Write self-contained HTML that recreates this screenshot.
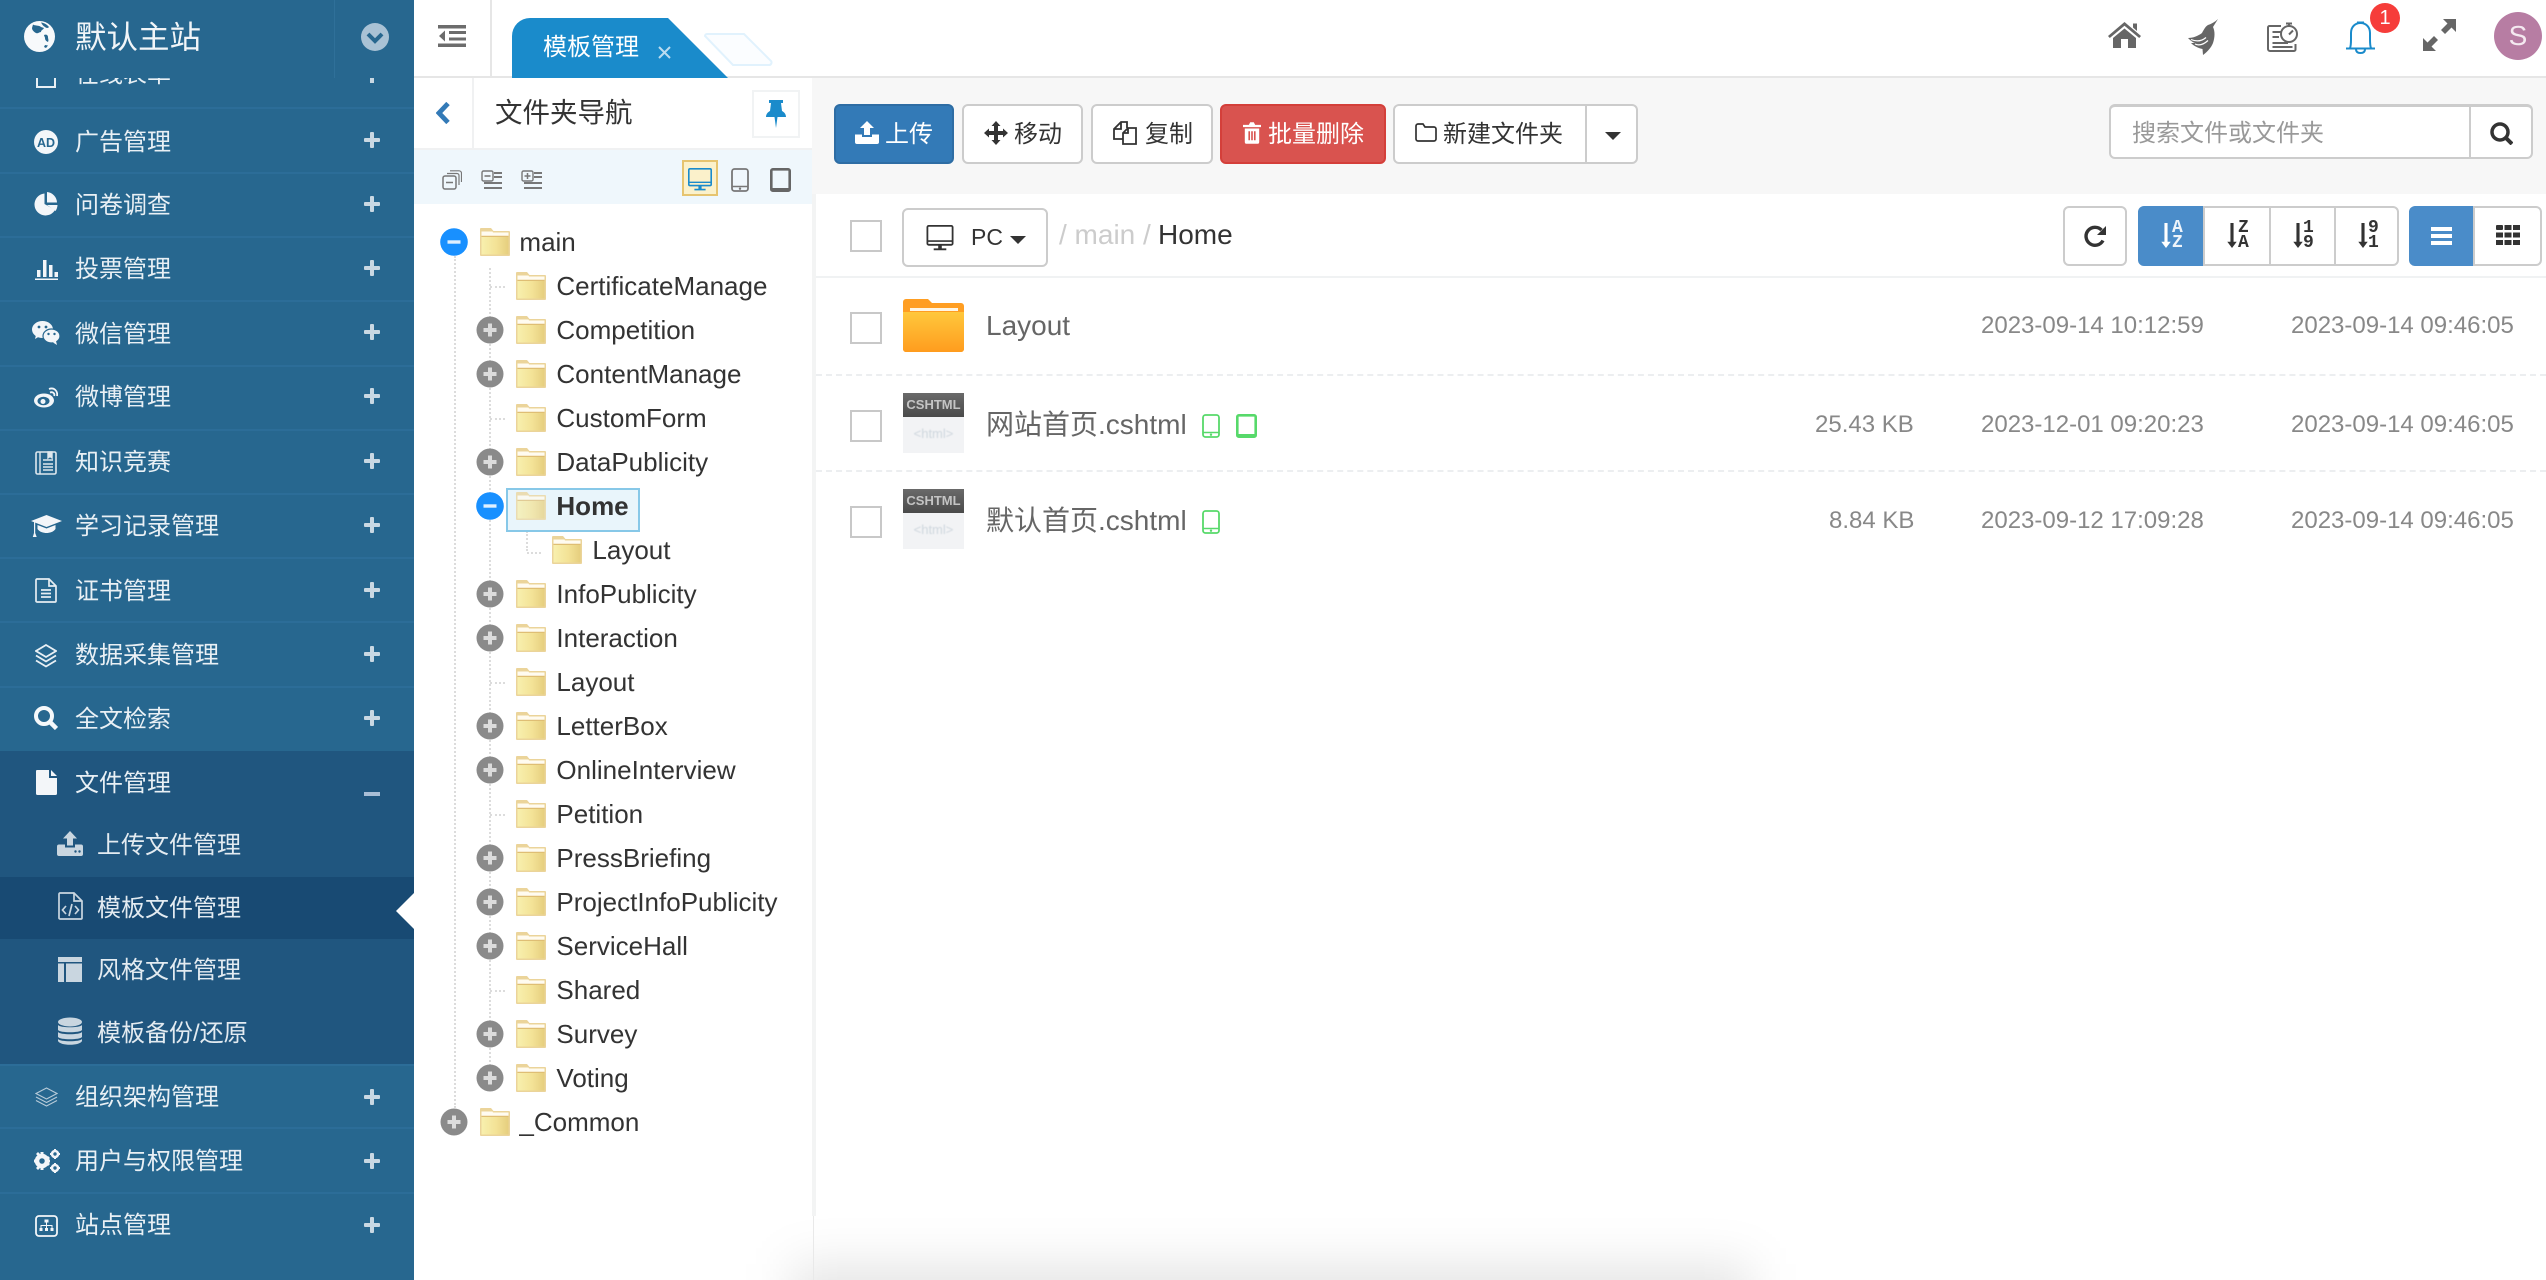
<!DOCTYPE html>
<html lang="zh-CN"><head><meta charset="utf-8"><title>模板管理</title>
<style>
html,body{margin:0;padding:0;width:2546px;height:1280px;overflow:hidden;background:#fff}
body{position:relative;font-family:"Liberation Sans","Noto Sans CJK SC",sans-serif;color:#333}
.a,.t,svg.i{position:absolute}
.t{white-space:nowrap;line-height:40px;height:40px}
.m{font-size:24px;color:#e9f0f5;left:75px;margin-top:2px}
.s{font-size:24px;color:#e3ebf1;left:97px;margin-top:2px}
.sep{position:absolute;left:0;width:414px;height:2px;background:#2c6d98}
.p{position:absolute;left:364px;width:16px;height:16px;margin-top:1px}
.p:before,.p:after{content:"";position:absolute;background:#c9d8e3;border-radius:1px}
.p:before{left:0;top:6px;width:16px;height:4px}.p:after{left:6px;top:0;width:4px;height:16px}
.n{font-size:26px;color:#333;margin-left:-.6px}
.d{font-size:24px;color:#888;margin-top:2px}
.b{position:absolute;box-sizing:border-box;height:60px;top:104px;border:2px solid #ccc;border-radius:6px;background:#fff}
.bb{position:absolute;box-sizing:border-box;height:60px;top:206px;border:2px solid #ccc;background:#fff}
.bt{font-size:24px;color:#333;margin-top:2px}
.cb{position:absolute;box-sizing:border-box;width:32px;height:32px;left:850px;border:2px solid #c8c8c8;background:#fff}
.dot{position:absolute;border-left:2px dotted #dcdcdc;width:0}
.doth{position:absolute;border-top:2px dotted #dcdcdc;height:0}
.mk{font-family:"Liberation Mono",monospace;font-weight:bold;font-size:18px;line-height:17px;color:#333;position:absolute;white-space:nowrap}
.th{position:absolute;left:903px;width:61px;height:60px;background:#f2f3f5}
.th i{display:block;height:24px;background:linear-gradient(#6a6a6a,#4a4a4a);color:#c4c4c4;font:bold 13px/24px "Liberation Sans",sans-serif;text-align:center}
.th b{display:block;font:normal 13px/34px "Liberation Sans",sans-serif;color:#cfd7de;text-align:center;filter:blur(.5px)}
.mm{margin-top:2px}
</style></head><body>
<svg width="0" height="0" style="position:absolute">
<defs>
<linearGradient id="fg" x1="0" y1="0" x2="1" y2="0"><stop offset="0" stop-color="#f8f0ae"/><stop offset=".55" stop-color="#f3e296"/><stop offset="1" stop-color="#e6ce7e"/></linearGradient>
<linearGradient id="og" x1="0" y1="0" x2="0" y2="1"><stop offset="0" stop-color="#ffc83c"/><stop offset="1" stop-color="#ff9c1e"/></linearGradient>
<symbol id="fo" viewBox="0 0 30 28"><path d="M1 0h10l2.500 3H29a1 1 0 0 1 1 1v23a1 1 0 0 1-1 1H1a1 1 0 0 1-1-1V1a1 1 0 0 1 1-1z" fill="#ebd49a"/><path d="M1.500 3.500h11l.5 1h15.500V8H1.500z" fill="#fffbf0"/><path d="M1.500 9h27v17.500h-27z" fill="url(#fg)"/><path d="M1.500 7.800h27V9h-27z" fill="#dfbe74"/></symbol>
<symbol id="pl" viewBox="0 0 28 28"><circle cx="14" cy="14" r="13.500" fill="#8a8a8a"/><path d="M12 7.500h4V12h4.500v4H16v4.500h-4V16H7.500v-4H12z" fill="#dcdcdc"/></symbol>
<symbol id="mi" viewBox="0 0 28 28"><circle cx="14" cy="14" r="13.800" fill="#1890ff"/><path d="M7.500 12.300h13v3.400h-13z" fill="#dff0ff"/></symbol>
<symbol id="ph" viewBox="0 0 18 24"><rect x="1" y="1" width="16" height="22" rx="2.500" fill="none" stroke="currentColor" stroke-width="1.800"/><path d="M1 18.500h16" stroke="currentColor" stroke-width="1.500"/><circle cx="9" cy="20.700" r="1.200" fill="currentColor"/></symbol>
<symbol id="tb" viewBox="0 0 21 24"><rect x="1.300" y="1.300" width="18.400" height="21.400" rx="1.500" fill="none" stroke="currentColor" stroke-width="2.600"/><path d="M1 20h19v3H1z" fill="currentColor"/></symbol>
<symbol id="mon" viewBox="0 0 32 30"><path d="M2 2.500a1.500 1.500 0 0 1 1.500-1.500h25A1.500 1.500 0 0 1 30 2.500v18a1.500 1.500 0 0 1-1.500 1.500h-25A1.500 1.500 0 0 1 2 20.500z" fill="none" stroke="currentColor" stroke-width="2"/><path d="M2 17h28v1.800H2zM14 22h4v4h-4zM9 26h14v2H9z" fill="currentColor"/></symbol>
<symbol id="dn" viewBox="0 0 12 32"><path d="M4 0h4v24h4l-6 8-6-8h4z" fill="currentColor"/></symbol>
</defs></svg>

<!-- sidebar -->
<div class="a" style="left:0;top:0;width:414px;height:1280px;background:#27678f"></div>
<div class="t m" style="top:53px">在线表单</div>
<svg class="i" style="left:36px;top:66px" width="20" height="22" viewBox="0 0 20 22"><rect x="1" y="1" width="18" height="20" fill="none" stroke="#e9f0f5" stroke-width="2"/></svg>
<div class="a" style="left:370px;top:70px;width:4px;height:13px;background:#c9d8e3"></div>
<div class="a" style="left:0;top:0;width:414px;height:78px;background:#27678f"></div>
<div class="a" style="left:334px;top:0;width:1px;height:78px;background:#2f7099"></div>
<svg class="i" style="left:24px;top:21px" width="31" height="31" viewBox="0 0 31 31"><circle cx="15.500" cy="15.500" r="15.500" fill="#f7f9fb"/><path d="M9 3.500C11 5 15 4 17 6l3 1c-1 2-3 2-3 4-2 0-3 2-5 1C10 11 8 9 8 7zM17 1.500c3 .3 6 2 8 4.500-1 1.500-3 1-4 0-2-1-3-3-4-4.500zM20 14c2-1 4 0 4 2s1 3 0 5c-2-1-3-2-3-4 0-1-1-2-1-3zM21 24l3 .500-2 2.500-2-1z" fill="#27678f"/></svg>
<div class="t" style="left:75px;top:17px;font-size:31.500px;color:#f1f5f8">默认主站</div>
<svg class="i" style="left:361px;top:23px" width="28" height="28" viewBox="0 0 28 28"><circle cx="14" cy="14" r="14" fill="#a9c2d5"/><path d="M7 11l7 7 7-7" fill="none" stroke="#27678f" stroke-width="4"/></svg>

<div class="sep" style="top:107px"></div><div class="sep" style="top:172px"></div><div class="sep" style="top:236px"></div><div class="sep" style="top:300px"></div><div class="sep" style="top:365px"></div><div class="sep" style="top:429px"></div><div class="sep" style="top:493px"></div><div class="sep" style="top:557px"></div><div class="sep" style="top:621px"></div><div class="sep" style="top:686px"></div>

<div class="t m" style="top:121px">广告管理</div><div class="p" style="top:131px"></div>
<svg class="i" style="left:34px;top:130px" width="24" height="24" viewBox="0 0 24 24"><circle cx="12" cy="12" r="12" fill="#f3f6f9"/><text x="12" y="17" text-anchor="middle" font-family="Liberation Sans" font-weight="bold" font-size="12.500" fill="#27678f">AD</text></svg>
<div class="t m" style="top:184px">问卷调查</div><div class="p" style="top:195px"></div>
<svg class="i" style="left:34px;top:192px" width="24" height="24" viewBox="0 0 24 24"><path d="M10.500 1.500A11 11 0 1 0 21 18l-10.500-6z" fill="#f3f6f9"/><path d="M13 0a11 11 0 0 1 10 10.500H13z" fill="#f3f6f9"/><path d="M13 13h10.500a11 11 0 0 1-2 6z" fill="#f3f6f9"/></svg>
<div class="t m" style="top:248px">投票管理</div><div class="p" style="top:259px"></div>
<svg class="i" style="left:35px;top:258px" width="23" height="22" viewBox="0 0 23 22"><path d="M2 12h3.500v7H2zM8 2h3.500v17H8zM14 7h3.500v12H14zM19.500 14H23v5h-3.500zM0 20.500h23V22H0z" fill="#f3f6f9"/></svg>
<div class="t m" style="top:313px">微信管理</div><div class="p" style="top:323px"></div>
<svg class="i" style="left:32px;top:321px" width="28" height="24" viewBox="0 0 28 24"><ellipse cx="10.500" cy="8.500" rx="10.500" ry="8.500" fill="#f3f6f9"/><path d="M4 14l-1 4 5-3z" fill="#f3f6f9"/><ellipse cx="19.500" cy="15" rx="8.500" ry="7" fill="#f3f6f9" stroke="#27678f" stroke-width="1.200"/><path d="M24 20l1 4-4-2.500z" fill="#f3f6f9"/><circle cx="7" cy="6" r="1.400" fill="#27678f"/><circle cx="14" cy="6" r="1.400" fill="#27678f"/><circle cx="16.500" cy="13" r="1.200" fill="#27678f"/><circle cx="22.500" cy="13" r="1.200" fill="#27678f"/></svg>
<div class="t m" style="top:376px">微博管理</div><div class="p" style="top:387px"></div>
<svg class="i" style="left:34px;top:387px" width="24" height="21" viewBox="0 0 24 21"><ellipse cx="10" cy="13.500" rx="10" ry="7" fill="#f3f6f9"/><ellipse cx="9.500" cy="14" rx="6" ry="4.300" fill="#27678f"/><circle cx="9" cy="14.500" r="2.500" fill="#f3f6f9"/><path d="M15 2c5-2 9 2 8 7M16 5.500c3-1 5 1 4.200 3.500" fill="none" stroke="#f3f6f9" stroke-width="1.800"/></svg>
<div class="t m" style="top:441px">知识竞赛</div><div class="p" style="top:452px"></div>
<svg class="i" style="left:35px;top:451px" width="22" height="24" viewBox="0 0 22 24"><rect x="1" y="1" width="20" height="22" rx="1.500" fill="none" stroke="#dfe8ee" stroke-width="1.600"/><path d="M5 1v22M13 1v6l2-1.500L17 7V1zM8 9h10M8 13h10M8 16h10M8 19h10" fill="none" stroke="#dfe8ee" stroke-width="1.400"/><path d="M13 1h4v6l-2-1.500L13 7z" fill="#dfe8ee"/></svg>
<div class="t m" style="top:505px">学习记录管理</div><div class="p" style="top:516px"></div>
<svg class="i" style="left:31px;top:515px" width="31" height="22" viewBox="0 0 31 22"><path d="M15.500 0L31 6 15.500 12 0 6zM6.500 10l9 3.500 9-3.500v4c-2 3-6 4-9 4s-7-1-9-4z" fill="#f3f6f9"/><path d="M3 7l1.200.5V18l1.500 4H1.800L3 18z" fill="#f3f6f9"/></svg>
<div class="t m" style="top:570px">证书管理</div><div class="p" style="top:581px"></div>
<svg class="i" style="left:35px;top:578px" width="22" height="25" viewBox="0 0 22 25"><path d="M2 1h12l7 7v15a1 1 0 0 1-1 1H2a1 1 0 0 1-1-1V2a1 1 0 0 1 1-1zM14 1v7h7M6 12h10M6 15.500h10M6 19h10" fill="none" stroke="#e6edf2" stroke-width="1.700"/></svg>
<div class="t m" style="top:634px">数据采集管理</div><div class="p" style="top:645px"></div>
<svg class="i" style="left:35px;top:644px" width="22" height="24" viewBox="0 0 22 24"><path d="M11 1l10 6-10 6L1 7zM1 11.500l10 6 10-6M1 16.500l10 6 10-6" fill="none" stroke="#e9f0f5" stroke-width="1.800"/></svg>
<div class="t m" style="top:698px">全文检索</div><div class="p" style="top:709px"></div>
<svg class="i" style="left:34px;top:706px" width="24" height="24" viewBox="0 0 24 24"><circle cx="10" cy="10" r="8" fill="none" stroke="#f5f8fa" stroke-width="4"/><path d="M15.500 15.500l7 7" stroke="#f5f8fa" stroke-width="4.500"/></svg>

<div class="a" style="left:0;top:751px;width:414px;height:313px;background:#20567f"></div>
<div class="a" style="left:0;top:877px;width:414px;height:62px;background:#184a73"></div>
<svg class="i" style="left:396px;top:893px" width="18" height="36" viewBox="0 0 18 36"><path d="M18 0L0 18l18 18z" fill="#fff"/></svg>
<div class="t m" style="top:762px">文件管理</div>
<div class="a" style="left:364px;top:792px;width:16px;height:4px;background:#a9bed6"></div>
<svg class="i" style="left:36px;top:770px" width="21" height="25" viewBox="0 0 21 25"><path d="M1 0h12v8h8v15.500a1.500 1.500 0 0 1-1.500 1.500h-18A1.500 1.500 0 0 1 0 23.500V1a1 1 0 0 1 1-1zM15 0l6 6h-6z" fill="#f3f6f9"/></svg>
<div class="t s" style="top:824px">上传文件管理</div>
<svg class="i" style="left:57px;top:831px" width="26" height="25" viewBox="0 0 26 25"><path d="M13 0l7 7.500h-4v7h-6v-7H6zM0 15.500a2 2 0 0 1 2-2h6v3h10v-3h6a2 2 0 0 1 2 2V23a2 2 0 0 1-2 2H2a2 2 0 0 1-2-2z" fill="#c9d6e0"/><circle cx="18.500" cy="20.500" r="1.200" fill="#20567f"/><circle cx="22.500" cy="20.500" r="1.200" fill="#20567f"/></svg>
<div class="t s" style="top:887px">模板文件管理</div>
<svg class="i" style="left:58px;top:892px" width="25" height="28" viewBox="0 0 25 28"><path d="M2 1h14l8 8v17a1 1 0 0 1-1 1H2a1 1 0 0 1-1-1V2a1 1 0 0 1 1-1zM16 1v8h8M8 14l-3.500 4L8 22M17 14l3.500 4-3.500 4M14 12l-3 12" fill="none" stroke="#c9d6e0" stroke-width="1.700"/></svg>
<div class="t s" style="top:949px">风格文件管理</div>
<svg class="i" style="left:58px;top:957px" width="24" height="25" viewBox="0 0 24 25"><path d="M0 0h24v5H0zM0 6.500h6V25H0zM8 6.500h16V25H8z" fill="#c9d6e0"/></svg>
<div class="t s" style="top:1012px">模板备份/还原</div>
<svg class="i" style="left:58px;top:1017px" width="24" height="28" viewBox="0 0 24 28"><ellipse cx="12" cy="5" rx="12" ry="4.500" fill="#c9d6e0"/><path d="M0 8c2 3 22 3 24 0v5c-2 3-22 3-24 0zM0 15c2 3 22 3 24 0v5c-2 3-22 3-24 0zM0 22c2 3 22 3 24 0v2c-2 5-22 5-24 0z" fill="#c9d6e0"/></svg>

<div class="sep" style="top:1064px"></div><div class="sep" style="top:1127px"></div><div class="sep" style="top:1192px"></div>
<div class="t m" style="top:1076px">组织架构管理</div><div class="p" style="top:1088px"></div>
<svg class="i" style="left:35px;top:1087px" width="23" height="21" viewBox="0 0 23 21"><path d="M11.500 1L22 6.500 11.500 12 1 6.500zM1 10l10.500 5.500L22 10M1 13.500L11.500 19 22 13.500" fill="none" stroke="#b7cbd9" stroke-width="1.100"/></svg>
<div class="t m" style="top:1140px">用户与权限管理</div><div class="p" style="top:1152px"></div>
<svg class="i" style="left:33px;top:1149px" width="27" height="24" viewBox="0 0 27 24"><circle cx="9" cy="12" r="5" fill="none" stroke="#f3f6f9" stroke-width="4.500"/><path d="M7.500 3h3v3h-3zM7.500 18h3v3h-3zM1 10.500h3v3H1zM14 10.500h3v3h-3zM3 5l2-2 2 2-2 2zM13 15l2-2 2 2-2 2zM3 19l2 2 2-2-2-2zM13 9l2 2 2-2-2-2z" fill="#f3f6f9"/><circle cx="22" cy="5" r="3" fill="none" stroke="#f3f6f9" stroke-width="2.600"/><circle cx="22" cy="19" r="3" fill="none" stroke="#f3f6f9" stroke-width="2.600"/><path d="M21 0h2v2h-2zM21 8h2v2h-2zM17 4h2v2h-2zM25 4h2v2h-2zM21 14h2v2h-2zM21 22h2v2h-2zM17 18h2v2h-2zM25 18h2v2h-2z" fill="#f3f6f9"/></svg>
<div class="t m" style="top:1204px">站点管理</div><div class="p" style="top:1216px"></div>
<svg class="i" style="left:35px;top:1215px" width="23" height="22" viewBox="0 0 23 22"><rect x="1" y="1" width="21" height="20" rx="3" fill="none" stroke="#f3f6f9" stroke-width="1.800"/><path d="M9.500 4.500h4v3h-4zM11 7.500h1v2.500h5.500v3h-1v-2H12v2h-1v-2H6.500v2h-1v-3H11zM4.500 13h3v3h-3zM10 13h3v3h-3zM15.500 13h3v3h-3z" fill="#f3f6f9"/></svg>

<!-- top header -->
<div class="a" style="left:414px;top:76px;width:2132px;height:2px;background:#e6e6e6"></div>
<svg class="i" style="left:438px;top:25px" width="28" height="22" viewBox="0 0 28 22"><path d="M0 0h28v3.500H0zM11 6h17v3H11zM11 12.500h17v3H11zM0 18.500h28V22H0zM7 5.500v11L1 11z" fill="#6c6c6c"/></svg>
<div class="a" style="left:490px;top:0;width:2px;height:76px;background:#e6e6e6"></div>
<svg class="i" style="left:512px;top:18px" width="216" height="60" viewBox="0 0 216 60"><path d="M0 60V18A18 18 0 0 1 18 0h138l60 60z" fill="#1a8bcb"/></svg>
<div class="t" style="left:543px;top:28px;font-size:24px;color:#fff">模板管理</div>
<svg class="i" style="left:658px;top:46px" width="13" height="13" viewBox="0 0 13 13"><path d="M1 1l11 11M12 1L1 12" stroke="#bcdcf0" stroke-width="2"/></svg>
<svg class="i" style="left:703px;top:33px" width="70" height="33" viewBox="0 0 70 33"><path d="M2 3a2 2 0 0 1 2-2h37l27 27a2.500 2.500 0 0 1-2 4H30z" fill="#fbfdff" stroke="#e1f2fd" stroke-width="2"/></svg>

<svg class="i" style="left:2108px;top:22px" width="33" height="26" viewBox="0 0 33 26"><path d="M16.500 0L33 14l-1.800 2L16.500 3.800 1.800 16 0 14z M25 1.500h4V9l-4-3.500z M5 16L16.500 6.500 28 16v10h-8v-9h-7v9H5z" fill="#666"/></svg>
<svg class="i" style="left:2188px;top:19px" width="31" height="36" viewBox="0 0 31 36"><path d="M30 0L25 8C27 12 27 18 25 24 23 29 19 33 15 36L14.500 30C10 29 6 27 3 24L7 24C4 23 2 21 0 19 5 19 10 17 14 14 16 10 18 7 20 6 23 5 27 3 30 0z" fill="#666"/><path d="M3 20.500C9 23 14 22 18 18.500M7 25C11 27 15 26 20 21.500" fill="none" stroke="#fff" stroke-width="1.200"/></svg>
<svg class="i" style="left:2267px;top:22px" width="31" height="31" viewBox="0 0 31 31"><path d="M14 4H2.500A1.500 1.500 0 0 0 1 5.500V27a2 2 0 0 0 2 2h24a1.500 1.500 0 0 0 1.500-1.500V22M5.500 10H14M5.500 15H12M5.500 21H21M5.500 25h20" fill="none" stroke="#666" stroke-width="2"/><circle cx="22" cy="12" r="8" fill="#fff" stroke="#666" stroke-width="2"/><path d="M19 1.500h6M22 1.500v3M26 8.500L22 12.500" fill="none" stroke="#666" stroke-width="2"/></svg>
<svg class="i" style="left:2346px;top:21px" width="29" height="33" viewBox="0 0 29 33"><path d="M0 27.500h29M4 27c1-2 1-5 1-9V12C5 6 9 2 14.500 2S24 6 24 12v6c0 4 0 7 1 9M11 1.500h7M10 28c0 3 2 4 4.500 4s4.500-1 4.500-4" fill="none" stroke="#1a8bcb" stroke-width="2"/></svg>
<div class="a" style="left:2370px;top:3px;width:30px;height:30px;border-radius:50%;background:#f63d3a;color:#fff;font-size:20px;line-height:30px;text-align:center">1</div>
<svg class="i" style="left:2423px;top:19px" width="33" height="32" viewBox="0 0 33 32"><path d="M33 0v13l-4.500-4.500L22 15l-4-4 6.500-6.500L20 0zM0 32V19l4.500 4.500L11 17l4 4-6.500 6.500L13 32z" fill="#666"/></svg>
<div class="a" style="left:2494px;top:12px;width:48px;height:48px;border-radius:50%;background:#b77da3;color:#f4e9f0;font-size:28px;line-height:47px;text-align:center">S</div>

<!-- folder nav panel -->
<div class="a" style="left:472px;top:78px;width:2px;height:70px;background:#f0f1f2"></div>
<div class="a" style="left:414px;top:148px;width:398px;height:2px;background:#f0f1f2"></div>
<svg class="i" style="left:436px;top:102px" width="15" height="22" viewBox="0 0 15 22"><path d="M12 1.500L3 11l9 9.500" fill="none" stroke="#337ab7" stroke-width="4.800"/></svg>
<div class="t" style="left:495px;top:93px;font-size:27.500px;color:#333">文件夹导航</div>
<div class="a" style="left:752px;top:90px;width:48px;height:48px;box-sizing:border-box;border:2px solid #f1f3f4"></div>
<svg class="i" style="left:766px;top:100px" width="20" height="28" viewBox="0 0 20 28"><path d="M3 0h14v3h-2l1 8c2 1 4 3 4 6H11.500L10 28l-1.500-11H0c0-3 2-5 4-6l1-8H3z" fill="#1a8bcb"/></svg>
<div class="a" style="left:414px;top:150px;width:398px;height:54px;background:#eff7fc"></div>
<svg class="i" style="left:442px;top:170px" width="20" height="20" viewBox="0 0 20 20"><rect x="1" y="6" width="13" height="13" rx="2" fill="none" stroke="#777" stroke-width="1.500"/><path d="M4 12.500h7" stroke="#777" stroke-width="1.500"/><path d="M5 3.500h10a2 2 0 0 1 2 2V15M8 .8h9a2.500 2.500 0 0 1 2.500 2.500V12" fill="none" stroke="#777" stroke-width="1.200"/></svg>
<svg class="i" style="left:481px;top:170px" width="21" height="20" viewBox="0 0 21 20"><rect x="1" y="1" width="11" height="10" rx="1.500" fill="none" stroke="#777" stroke-width="1.400"/><path d="M3.500 6h6" stroke="#777" stroke-width="1.600"/><path d="M13 2h8v2h-8zM13 6h8v2h-8zM3 12h18v2H3zM3 17h18v2H3z" fill="#777"/></svg>
<svg class="i" style="left:521px;top:170px" width="21" height="20" viewBox="0 0 21 20"><rect x="1" y="1" width="11" height="10" rx="1.500" fill="none" stroke="#777" stroke-width="1.400"/><path d="M3.500 6h6M6.500 3v6" stroke="#777" stroke-width="1.500"/><path d="M13 2h8v2h-8zM13 6h8v2h-8zM3 12h18v2H3zM3 17h18v2H3z" fill="#777"/></svg>
<div class="a" style="left:682px;top:160px;width:36px;height:36px;box-sizing:border-box;background:#fbf1cb;border:2.500px solid #e6c470"></div>
<svg class="i" style="left:686px;top:168px;color:#1a8bcb" width="28" height="24"><use href="#mon"/></svg>
<svg class="i" style="left:731px;top:168px;color:#777" width="18" height="24"><use href="#ph"/></svg>
<svg class="i" style="left:770px;top:168px;color:#666" width="21" height="24"><use href="#tb"/></svg>

<!-- tree -->
<div class="dot" style="left:454px;top:256px;height:852px"></div>
<div class="dot" style="left:489px;top:268px;height:810px"></div>
<div class="doth" style="left:490px;top:286px;width:15px"></div>
<div class="doth" style="left:490px;top:418px;width:15px"></div>
<div class="doth" style="left:490px;top:682px;width:15px"></div>
<div class="doth" style="left:490px;top:814px;width:15px"></div>
<div class="doth" style="left:490px;top:990px;width:15px"></div>
<div class="dot" style="left:526px;top:531px;height:20px"></div>
<div class="doth" style="left:527px;top:552px;width:14px"></div>

<div class="a" style="left:506px;top:488px;width:134px;height:44px;box-sizing:border-box;background:#e9f5fb;border:2px solid #87c8e8"></div>

<svg class="i" style="left:440px;top:228px" width="28" height="28"><use href="#mi"/></svg>
<svg class="i" style="left:480px;top:228px" width="30" height="28"><use href="#fo"/></svg>
<div class="t n" style="left:520px;top:222px">main</div>

<svg class="i" style="left:516px;top:272px" width="30" height="28"><use href="#fo"/></svg><div class="t n" style="left:557px;top:266px">CertificateManage</div>
<svg class="i" style="left:476px;top:316px" width="28" height="28"><use href="#pl"/></svg><svg class="i" style="left:516px;top:316px" width="30" height="28"><use href="#fo"/></svg><div class="t n" style="left:557px;top:310px">Competition</div>
<svg class="i" style="left:476px;top:360px" width="28" height="28"><use href="#pl"/></svg><svg class="i" style="left:516px;top:360px" width="30" height="28"><use href="#fo"/></svg><div class="t n" style="left:557px;top:354px">ContentManage</div>
<svg class="i" style="left:516px;top:404px" width="30" height="28"><use href="#fo"/></svg><div class="t n" style="left:557px;top:398px">CustomForm</div>
<svg class="i" style="left:476px;top:448px" width="28" height="28"><use href="#pl"/></svg><svg class="i" style="left:516px;top:448px" width="30" height="28"><use href="#fo"/></svg><div class="t n" style="left:557px;top:442px">DataPublicity</div>
<svg class="i" style="left:476px;top:492px" width="28" height="28"><use href="#mi"/></svg><svg class="i" style="left:516px;top:492px" width="30" height="28" opacity=".75"><use href="#fo"/></svg><div class="t n" style="left:557px;top:486px;font-weight:bold">Home</div>
<svg class="i" style="left:552px;top:536px" width="30" height="28"><use href="#fo"/></svg><div class="t n" style="left:593px;top:530px">Layout</div>
<svg class="i" style="left:476px;top:580px" width="28" height="28"><use href="#pl"/></svg><svg class="i" style="left:516px;top:580px" width="30" height="28"><use href="#fo"/></svg><div class="t n" style="left:557px;top:574px">InfoPublicity</div>
<svg class="i" style="left:476px;top:624px" width="28" height="28"><use href="#pl"/></svg><svg class="i" style="left:516px;top:624px" width="30" height="28"><use href="#fo"/></svg><div class="t n" style="left:557px;top:618px">Interaction</div>
<svg class="i" style="left:516px;top:668px" width="30" height="28"><use href="#fo"/></svg><div class="t n" style="left:557px;top:662px">Layout</div>
<svg class="i" style="left:476px;top:712px" width="28" height="28"><use href="#pl"/></svg><svg class="i" style="left:516px;top:712px" width="30" height="28"><use href="#fo"/></svg><div class="t n" style="left:557px;top:706px">LetterBox</div>
<svg class="i" style="left:476px;top:756px" width="28" height="28"><use href="#pl"/></svg><svg class="i" style="left:516px;top:756px" width="30" height="28"><use href="#fo"/></svg><div class="t n" style="left:557px;top:750px">OnlineInterview</div>
<svg class="i" style="left:516px;top:800px" width="30" height="28"><use href="#fo"/></svg><div class="t n" style="left:557px;top:794px">Petition</div>
<svg class="i" style="left:476px;top:844px" width="28" height="28"><use href="#pl"/></svg><svg class="i" style="left:516px;top:844px" width="30" height="28"><use href="#fo"/></svg><div class="t n" style="left:557px;top:838px">PressBriefing</div>
<svg class="i" style="left:476px;top:888px" width="28" height="28"><use href="#pl"/></svg><svg class="i" style="left:516px;top:888px" width="30" height="28"><use href="#fo"/></svg><div class="t n" style="left:557px;top:882px">ProjectInfoPublicity</div>
<svg class="i" style="left:476px;top:932px" width="28" height="28"><use href="#pl"/></svg><svg class="i" style="left:516px;top:932px" width="30" height="28"><use href="#fo"/></svg><div class="t n" style="left:557px;top:926px">ServiceHall</div>
<svg class="i" style="left:516px;top:976px" width="30" height="28"><use href="#fo"/></svg><div class="t n" style="left:557px;top:970px">Shared</div>
<svg class="i" style="left:476px;top:1020px" width="28" height="28"><use href="#pl"/></svg><svg class="i" style="left:516px;top:1020px" width="30" height="28"><use href="#fo"/></svg><div class="t n" style="left:557px;top:1014px">Survey</div>
<svg class="i" style="left:476px;top:1064px" width="28" height="28"><use href="#pl"/></svg><svg class="i" style="left:516px;top:1064px" width="30" height="28"><use href="#fo"/></svg><div class="t n" style="left:557px;top:1058px">Voting</div>
<svg class="i" style="left:440px;top:1108px" width="28" height="28"><use href="#pl"/></svg><svg class="i" style="left:480px;top:1108px" width="30" height="28"><use href="#fo"/></svg><div class="t n" style="left:520px;top:1102px">_Common</div>

<!-- right area -->
<div class="a" style="left:812px;top:78px;width:1734px;height:116px;background:#f7f7f7"></div>
<div class="a" style="left:812px;top:194px;width:4px;height:1022px;background:#f3f4f4"></div>

<svg class="i" style="left:700px;top:1190px" width="1150" height="90" viewBox="0 0 1150 90"><defs><filter id="sh" x="-20%" y="-100%" width="140%" height="300%"><feGaussianBlur stdDeviation="24"/></filter></defs><rect x="92" y="74" width="958" height="80" fill="#000" fill-opacity=".1" filter="url(#sh)"/></svg>
<div class="a" style="left:813px;top:1216px;width:1px;height:64px;background:#e9e9e9"></div>

<div class="b" style="left:834px;width:120px;background:#337ab7;border-color:#2e6da4"></div>
<svg class="i" style="left:855px;top:121px" width="24" height="23" viewBox="0 0 24 23"><path d="M12 0l7 7h-4v7H9V7H5zM0 13.500h7V16h10v-2.500h7V21a2 2 0 0 1-2 2H2a2 2 0 0 1-2-2z" fill="#fff"/></svg>
<div class="t bt" style="left:885px;top:113px;color:#fff">上传</div>
<div class="b" style="left:962px;width:121px"></div>
<svg class="i" style="left:984px;top:121px" width="24" height="24" viewBox="0 0 24 24"><path d="M12 0l4.500 5H14v5h5V7.500l5 4.500-5 4.500V14h-5v5h2.500L12 24l-4.500-5H10v-5H5v2.500L0 12l5-4.500V10h5V5H7.500z" fill="#333"/></svg>
<div class="t bt" style="left:1014px;top:113px">移动</div>
<div class="b" style="left:1091px;width:122px"></div>
<svg class="i" style="left:1113px;top:121px" width="24" height="24" viewBox="0 0 24 24"><path d="M15 7H23V23H10V12zM15 7v5h-5M10 18H1V8L8 1H14V7M8 1V8H1" fill="none" stroke="#333" stroke-width="1.800"/></svg>
<div class="t bt" style="left:1145px;top:113px">复制</div>
<div class="b" style="left:1220px;width:166px;background:#d9534f;border-color:#d43f3a"></div>
<svg class="i" style="left:1243px;top:122px" width="18" height="22" viewBox="0 0 20 24"><path d="M6.500 3L8 0h4l1.500 3H20v2.500H0V3zM2 7h16v15a2 2 0 0 1-2 2H4a2 2 0 0 1-2-2zM6 10v10h1.800V10zm3.100 0v10h1.800V10zm3.100 0v10H14V10z" fill="#fff" fill-rule="evenodd"/></svg>
<div class="t bt" style="left:1268px;top:113px;color:#fff">批量删除</div>
<div class="b" style="left:1393px;width:194px;border-radius:6px 0 0 6px"></div>
<svg class="i" style="left:1415px;top:123px" width="22" height="19" viewBox="0 0 22 19"><path d="M1 3a2 2 0 0 1 2-2h5l2 3h9a2 2 0 0 1 2 2v10a2 2 0 0 1-2 2H3a2 2 0 0 1-2-2z" fill="none" stroke="#333" stroke-width="1.700"/></svg>
<div class="t bt" style="left:1443px;top:113px">新建文件夹</div>
<div class="b" style="left:1585px;width:53px;border-radius:0 6px 6px 0"></div>
<div class="a" style="left:1605px;top:132px;width:0;height:0;border-left:8px solid transparent;border-right:8px solid transparent;border-top:8px solid #333"></div>

<div class="a" style="left:2109px;top:104px;width:424px;height:55px;box-sizing:border-box;border:2px solid #ccc;border-top-width:3px;border-radius:6px;background:#fff"></div>
<div class="a" style="left:2469px;top:106px;width:2px;height:52px;background:#ccc"></div>
<div class="t mm" style="left:2132px;top:112px;font-size:24px;color:#999">搜索文件或文件夹</div>
<svg class="i" style="left:2490px;top:122px" width="23" height="23" viewBox="0 0 23 23"><circle cx="10" cy="10" r="8" fill="none" stroke="#333" stroke-width="3.500"/><path d="M15.500 15.500l6.500 6.500" stroke="#333" stroke-width="4"/></svg>

<div class="cb" style="top:220px"></div>
<div class="a" style="left:902px;top:208px;width:146px;height:59px;box-sizing:border-box;border:2px solid #ccc;border-radius:6px;background:#fff"></div>
<svg class="i" style="left:924px;top:225px;color:#333" width="32" height="27" viewBox="0 0 32 30"><use href="#mon"/></svg>
<div class="t" style="left:971px;top:217px;font-size:23px;color:#333">PC</div>
<div class="a" style="left:1010px;top:236px;width:0;height:0;border-left:8px solid transparent;border-right:8px solid transparent;border-top:8px solid #333"></div>
<div class="t" style="left:1059px;top:215px;font-size:28px;color:#ccc">/ main /</div>
<div class="t" style="left:1158px;top:215px;font-size:28px;color:#333">Home</div>

<div class="bb" style="left:2063px;width:64px;border-radius:6px"></div>
<svg class="i" style="left:2084px;top:225px" width="23" height="23" viewBox="0 0 23 23"><path d="M19 15.500A9 9 0 1 1 17.500 5" fill="none" stroke="#333" stroke-width="3.400"/><path d="M22 1v9h-9z" fill="#333"/></svg>
<div class="bb" style="left:2138px;width:67px;border-radius:6px 0 0 6px;background:#4a8cc9;border-color:#4a8cc9"></div>
<div class="bb" style="left:2203px;width:68px"></div>
<div class="bb" style="left:2269px;width:67px"></div>
<div class="bb" style="left:2334px;width:65px;border-radius:0 6px 6px 0"></div>
<svg class="i" style="left:2160px;top:223px;color:#fff" width="12" height="25"><use href="#dn"/></svg>
<div class="mk" style="left:2172px;top:220px;color:#eef4fa">A</div><div class="mk" style="left:2172px;top:235px;color:#eef4fa">Z</div>
<svg class="i" style="left:2226px;top:223px;color:#333" width="12" height="25"><use href="#dn"/></svg>
<div class="mk" style="left:2238px;top:220px">Z</div><div class="mk" style="left:2238px;top:235px">A</div>
<svg class="i" style="left:2292px;top:223px;color:#333" width="12" height="25"><use href="#dn"/></svg>
<div class="mk" style="left:2303px;top:220px">1</div><div class="mk" style="left:2303px;top:235px">9</div>
<svg class="i" style="left:2357px;top:223px;color:#333" width="12" height="25"><use href="#dn"/></svg>
<div class="mk" style="left:2368px;top:220px">9</div><div class="mk" style="left:2368px;top:235px">1</div>
<div class="bb" style="left:2409px;width:66px;border-radius:6px 0 0 6px;background:#4a8cc9;border-color:#4a8cc9"></div>
<div class="bb" style="left:2473px;width:69px;border-radius:0 6px 6px 0"></div>
<div class="a" style="left:2431px;top:227px;width:21px;height:18px;background:linear-gradient(#fff 0 4px,transparent 4px 7px,#fff 7px 11px,transparent 11px 14px,#fff 14px 18px)"></div>
<svg class="i" style="left:2496px;top:225px" width="24" height="20" viewBox="0 0 24 20"><path d="M0 1a1 1 0 0 1 1-1h5a1 1 0 0 1 1 1v3a1 1 0 0 1-1 1H1a1 1 0 0 1-1-1zM8.500 0h7v5h-7zM17 0h7v5h-7zM0 7.500h7v5H0zM8.500 7.500h7v5h-7zM17 7.500h7v5h-7zM0 15h7v5H0zM8.500 15h7v5h-7zM17 15h7v5h-7z" fill="#333"/></svg>
<div class="a" style="left:816px;top:276px;width:1730px;height:2px;background:#f0f2f3"></div>

<!-- rows -->
<div class="cb" style="top:312px"></div>
<svg class="i" style="left:903px;top:299px" width="61" height="53" viewBox="0 0 61 53"><path d="M3 0h22l4 4h29a3 3 0 0 1 3 3v43a3 3 0 0 1-3 3H3a3 3 0 0 1-3-3V3a3 3 0 0 1 3-3z" fill="#ff9e22"/><path d="M7 9h48v3H7z" fill="#fff6e4"/><path d="M0 13h61v37a3 3 0 0 1-3 3H3a3 3 0 0 1-3-3z" fill="url(#og)"/></svg>
<div class="t" style="left:986px;top:306px;font-size:28px;color:#666">Layout</div>
<div class="t d" style="left:1981px;top:304px">2023-09-14 10:12:59</div>
<div class="t d" style="left:2291px;top:304px">2023-09-14 09:46:05</div>
<div class="a" style="left:816px;top:374px;width:1730px;height:0;border-top:2px dashed #eceef0"></div>

<div class="cb" style="top:410px"></div>
<div class="th" style="top:393px"><i>CSHTML</i><b>&lt;html&gt;</b></div>
<div class="t mm" style="left:986px;top:403px;font-size:28px;color:#666">网站首页.cshtml</div>
<svg class="i" style="left:1202px;top:414px;color:#57d96a" width="18" height="24"><use href="#ph"/></svg>
<svg class="i" style="left:1236px;top:414px;color:#57d96a" width="21" height="24"><use href="#tb"/></svg>
<div class="t d" style="left:1815px;top:403px">25.43 KB</div>
<div class="t d" style="left:1981px;top:403px">2023-12-01 09:20:23</div>
<div class="t d" style="left:2291px;top:403px">2023-09-14 09:46:05</div>
<div class="a" style="left:816px;top:470px;width:1730px;height:0;border-top:2px dashed #eceef0"></div>

<div class="cb" style="top:506px"></div>
<div class="th" style="top:489px"><i>CSHTML</i><b>&lt;html&gt;</b></div>
<div class="t mm" style="left:986px;top:499px;font-size:28px;color:#666">默认首页.cshtml</div>
<svg class="i" style="left:1202px;top:510px;color:#57d96a" width="18" height="24"><use href="#ph"/></svg>
<div class="t d" style="left:1829px;top:499px">8.84 KB</div>
<div class="t d" style="left:1981px;top:499px">2023-09-12 17:09:28</div>
<div class="t d" style="left:2291px;top:499px">2023-09-14 09:46:05</div>
</body></html>
